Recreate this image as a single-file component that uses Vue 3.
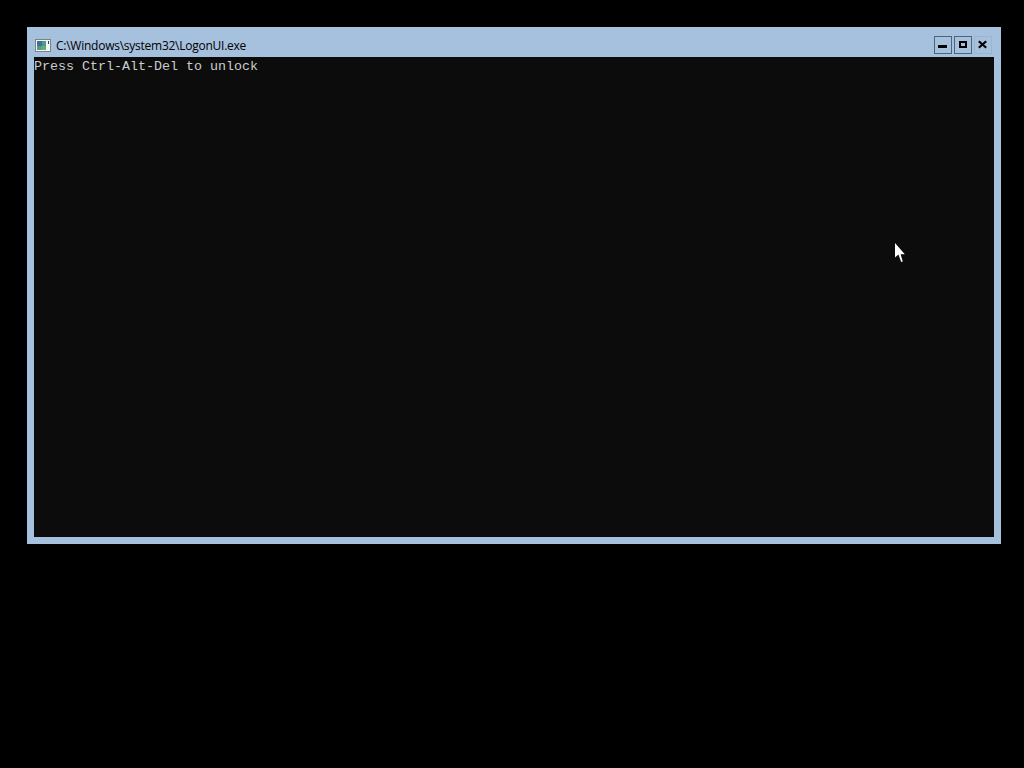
<script setup>
const title = 'C:\\Windows\\system32\\LogonUI.exe'
const message = 'Press Ctrl-Alt-Del to unlock'
</script>

<template>
  <div class="screen">
    <div class="window">
      <div class="titlebar">
        <svg class="app-icon" width="16" height="13" viewBox="0 0 16 13">
          <rect x="0.5" y="0.5" width="15" height="12" fill="#f4f5f5" stroke="#7d8286" />
          <rect x="2" y="2" width="9" height="9" fill="#4f9a88" />
          <rect x="2" y="2" width="5" height="5" fill="#3f6f98" />
          <rect x="6" y="7" width="5" height="4" fill="#6bab73" />
          <rect x="13" y="2" width="1" height="3" fill="#3f4346" />
        </svg>
        <span class="title">{{ title }}</span>
        <div class="controls">
          <button class="ctl ctl-on" aria-label="Minimize">
            <svg width="10" height="10" viewBox="0 0 10 10"><rect x="0" y="5" width="9" height="3" fill="#000" /></svg>
          </button>
          <button class="ctl ctl-on" aria-label="Maximize">
            <svg width="10" height="10" viewBox="0 0 10 10"><path d="M1 1h8v7H1z M3 3v3h4V3z" fill="#000" fill-rule="evenodd" /></svg>
          </button>
          <button class="ctl" aria-label="Close">
            <svg width="10" height="10" viewBox="0 0 10 10"><path d="M0.8 1.2 8.2 7.8M8.2 1.2 0.8 7.8" stroke="#000" stroke-width="2.2" fill="none" /></svg>
          </button>
        </div>
      </div>
      <div class="console">{{ message }}</div>
    </div>
    <svg class="cursor" width="12" height="20" viewBox="0 0 12 20">
      <path d="M1 0V14.5L4.4 11.6L7.2 19L8.8 18.4L6.6 11.2H10.8Z" fill="#fff" />
    </svg>
  </div>
</template>

<style>
html, body { margin: 0; background: #000; }
</style>

<style scoped>
.screen {
  position: relative;
  width: 1024px;
  height: 768px;
  background: #000;
  padding: 27px 23px 0 27px;
  box-sizing: border-box;
  overflow: hidden;
}
.window {
  width: 974px;
  height: 517px;
  box-sizing: border-box;
  background: #a6c1dd;
  padding: 0 7px 7px;
  display: flex;
  flex-direction: column;
}
.titlebar {
  height: 30px;
  display: flex;
  align-items: center;
  flex: none;
}
.app-icon { margin: 6px 0 0 1px; flex: none; }
.title {
  margin: 8px 0 0 5px;
  font: 12px/16px "Open Sans", "Noto Sans", sans-serif;
  letter-spacing: -0.25px;
  color: #000;
  white-space: nowrap;
}
.controls {
  margin-left: auto;
  margin-right: 2px;
  display: flex;
  gap: 2px;
  margin-top: 6px;
}
.ctl {
  width: 18px;
  height: 18px;
  padding: 0;
  box-sizing: border-box;
  border: 1px solid #a0b4c9;
  background: transparent;
  display: flex;
  align-items: center;
  justify-content: center;
}
.ctl-on { border-color: #4f6478; }
.console {
  flex: 1;
  background: #0c0c0c;
  color: #cccccc;
  font: 13.33px/16px "Liberation Mono", "DejaVu Sans Mono", monospace;
  padding-top: 2px;
  white-space: pre;
}
.cursor {
  position: absolute;
  left: 894px;
  top: 243px;
}
</style>
